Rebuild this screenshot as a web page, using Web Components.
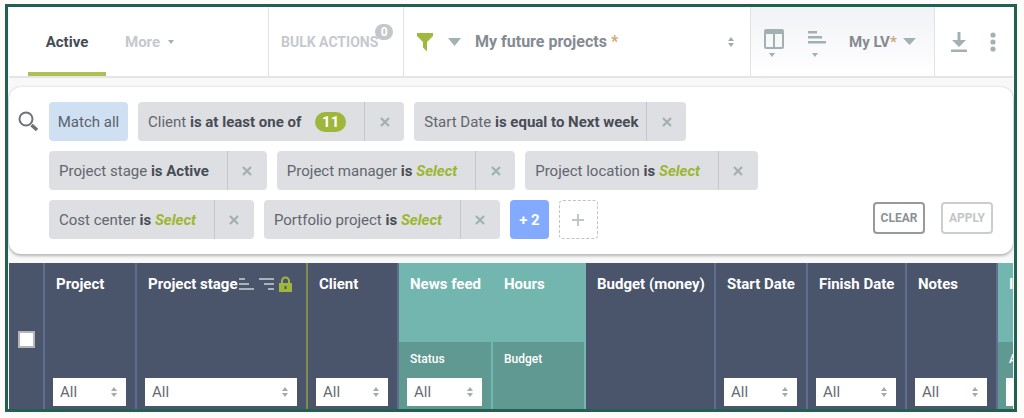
<!DOCTYPE html>
<html lang="en">
<head>
<meta charset="utf-8">
<title>Projects</title>
<style>
  body { margin: 0; background: #fdfcfb; font-family: Roboto, "Liberation Sans", sans-serif; font-size: 15px; line-height: 20px; color: #4a4d55; }
</style>
</head>
<body>
<project-list-page></project-list-page>

<template id="page-tpl">
  <style>
    :host { display: block; padding: 4px 7px 6px 5px; }
    main { border: 3px solid #22614f; padding: 0 1px; background: #f8f8f8; overflow: hidden; }
    filter-panel { margin: 9px 0; }
  </style>
  <main>
    <top-bar></top-bar>
    <filter-panel></filter-panel>
    <project-grid></project-grid>
  </main>
</template>

<template id="topbar-tpl">
  <style>
    :host { display: grid; grid-template-columns: 259px 135px minmax(0, 1fr) 184px 79px; height: 69px; background: #fff; border-bottom: 2px solid #e4e6e6; }
    * { box-sizing: border-box; }
    section, nav { display: flex; align-items: center; }
    section { border-left: 1px solid #e0e2e3; }
    button, select { font: inherit; color: inherit; background: none; border: 0; padding: 0; margin: 0; appearance: none; font-weight: 700; }
    nav { padding-left: 19px; }
    nav a { text-decoration: none; font-weight: 700; height: 69px; display: flex; align-items: center; color: #c5c9cd; gap: 8px; }
    nav a[aria-current] { color: #454a55; width: 78px; justify-content: center; border-bottom: 4px solid #aebf56; border-top: 4px solid transparent; }
    nav a + a { margin-left: 19px; }
    .bulk { padding-left: 12px; }
    .bulk button { color: #c5c9cd; font-size: 14px; display: flex; white-space: nowrap; }
    .badge { background: #c3c7cc; color: #fff; border-radius: 8px; width: 18px; height: 16px; line-height: 16px; font-size: 12px; text-align: center; margin: -8px 0 0 -3px; }
    .saved { padding: 0 16px 0 12px; color: #858b92; gap: 14px; font-size: 16px; }
    .saved .name { display: flex; gap: 4px; flex: 1; }
    .star { color: #cfa77c; font-weight: 700; }
    .view { background: linear-gradient(#f1f2f6, #fff); padding-left: 13px; color: #858b92; }
    .view .icon { margin-right: 24px; }
    .view .icon + .icon { margin-right: 23px; }
    .view .name { display: flex; align-items: center; }
    .view .caret { margin-left: 6px; }
    .end { padding-left: 15px; gap: 22px; }
    svg { display: block; fill: #a3b1b3; }
  </style>
  <nav>
    <a href="#active" aria-current="page">Active</a>
    <a href="#more">More <svg width="6" height="4"><path d="M0 0h6L3 4z"/></svg></a>
  </nav>
  <section class="bulk"><button>BULK ACTIONS<span class="badge">0</span></button></section>
  <section class="saved">
    <button aria-label="Filter"><svg width="18" height="20" style="fill:#9fb93f"><path d="M1 1h16v3l-6 6v9.500l-4-4V10L1 4z"/></svg></button>
    <button aria-label="Filter options"><svg width="13" height="8"><path d="M0 0h13L6.500 8z"/></svg></button>
    <span class="name"><select aria-label="Saved filter"><option>My future projects</option></select><span class="star">*</span></span>
    <sort-handle></sort-handle>
  </section>
  <section class="view">
    <button class="icon" aria-label="Columns"><svg width="20" height="30"><path fill-rule="evenodd" d="M2 2h16q2 0 2 2v16q0 2-2 2H2q-2 0-2-2V4q0-2 2-2zM2 7v13h7V7zM11 7v13h7V7zM5 26h6l-3 4z"/></svg></button>
    <button class="icon" aria-label="Grouping"><svg width="18" height="30"><path d="M0 4h9v2.400H0zM0 9h14v2.400H0zM0 14h18v2.400H0zM4 26h6l-3 4z"/></svg></button>
    <span class="name"><select aria-label="List view"><option>My LV</option></select><span class="star">*</span><svg class="caret" width="13" height="7"><path d="M0 0h13L6.500 7z"/></svg></span>
  </section>
  <section class="end">
    <button aria-label="Download"><svg width="18" height="20"><path d="M7.500 0h3v8H16l-7 7-7-7h5.500zM1 17.500h16V20H1z"/></svg></button>
    <button aria-label="More options"><svg width="6" height="20"><circle cx="3" cy="3" r="2.600"/><circle cx="3" cy="10" r="2.600"/><circle cx="3" cy="17" r="2.600"/></svg></button>
  </section>
</template>

<template id="handle-tpl">
  <style>:host { display: block; pointer-events: none; } svg { display: block; fill: #a3abad; }</style>
  <svg width="6" height="10"><path d="M0 4L3 0l3 4zM0 6h6L3 10z"/></svg>
</template>

<template id="panel-tpl">
  <style>
    :host { display: flex; gap: 11px; background: #fff; border-radius: 12px; padding: 15px 20px 15px 9px; box-shadow: 0 0 2px #c5c8c8, 0 2px 3px #b4b6b6; }
    .search { margin-top: 8px; flex: none; }
    .chips { flex: 1; display: flex; flex-wrap: wrap; gap: 10px; }
    button { font: inherit; margin: 0; padding: 0; box-sizing: border-box; cursor: pointer; }
    .chips > button { height: 39px; border: 0; border-radius: 4px; font-weight: 700; width: 39px; }
    .chips > .match { width: 79px; background: #cfe0f3; color: #5c626b; font-weight: 400; }
    .chips > .more { background: #82aaff; color: #fff; }
    .chips > .add { background: #fff; border: 1px dashed #bfc2c6; display: grid; place-items: center; }
    .actions { display: flex; gap: 16px; align-self: flex-end; padding-bottom: 5px; }
    .actions button { width: 52px; height: 32px; border: 2px solid #969a9e; border-radius: 4px; background: #fff; color: #8b9196; font-size: 12px; line-height: 28px; font-weight: 700; }
    .actions button + button { border-color: #cbced0; color: #c3c6c8; }
    .badge { background: #9eb63c; color: #fff; border-radius: 10px; padding: 0 7px; margin-left: 10px; font-weight: 700; display: inline-block; }
  </style>
  <svg class="search" width="20" height="22" fill="none" stroke="#6f7377"><circle cx="8" cy="9" r="6.500" stroke-width="2"/><path d="M13.500 15l5.500 5" stroke-width="3.500"/></svg>
  <div class="chips">
    <button class="match">Match all</button>
    <filter-chip>Client <b slot="rule">is at least one of</b><span slot="value" class="badge">11</span></filter-chip>
    <filter-chip tight>Start Date <b slot="rule">is equal to Next week</b></filter-chip>
    <filter-chip>Project stage <b slot="rule">is Active</b></filter-chip>
    <filter-chip select>Project manager <b slot="rule">is</b></filter-chip>
    <filter-chip select>Project location <b slot="rule">is</b></filter-chip>
    <filter-chip select>Cost center <b slot="rule">is</b></filter-chip>
    <filter-chip select>Portfolio project <b slot="rule">is</b></filter-chip>
    <button class="more">+ 2</button>
    <button class="add" aria-label="Add filter"><svg width="12" height="12" stroke="#c2c5c9" stroke-width="2"><path d="M6 0v12M0 6h12"/></svg></button>
  </div>
  <div class="actions"><button>CLEAR</button><button>APPLY</button></div>
</template>

<template id="chip-tpl">
  <style>
    :host { display: flex; height: 39px; background: #dddfe3; border-radius: 4px; color: #62666e; white-space: nowrap; }
    .text { padding: 10px 18px 9px 10px; }
    :host([tight]) .text { padding-right: 8px; }
    ::slotted(b) { color: #484c55; }
    .pick { display: none; color: #9cb62f; font-weight: 700; font-style: italic; text-decoration: none; }
    :host([select]) .pick { display: inline; }
    button { width: 40px; padding: 0; border: 0; border-left: 1px solid #c3c8cc; background: none; display: grid; place-items: center; cursor: pointer; }
  </style>
  <div class="text"><slot></slot> <slot name="rule"></slot> <slot name="value"></slot><a class="pick" href="#select">Select</a></div>
  <button aria-label="Remove filter"><svg width="10" height="10" stroke="#a4afb1" stroke-width="2.200"><path d="M1 1l8 8M9 1l-8 8"/></svg></button>
</template>

<template id="filter-tpl">
  <style>
    :host { display: grid; align-items: center; }
    select, sort-handle { grid-area: 1 / 1; }
    select { appearance: none; width: 100%; height: 28px; border: 0; border-radius: 0; margin: 0; padding: 0 7px; background: #fff; font: inherit; font-weight: 400; color: #666b72; }
    sort-handle { justify-self: end; margin-right: 9px; }
  </style>
  <select aria-label="Column filter"><option>All</option></select><sort-handle></sort-handle>
</template>

<template id="grid-tpl">
  <style>
    :host { display: block; overflow: hidden; }
    table { width: 1080px; min-width: 100%; table-layout: fixed; border-collapse: separate; border-spacing: 0; color: #fff; background: #4a546b; }
    th, td { padding: 0; box-sizing: border-box; text-align: left; border-right: 2px solid #5f6d8e; white-space: nowrap; overflow: hidden; }
    th { vertical-align: top; padding: 11px 0 0 11px; font-weight: 700; font-size: 15px; }
    td { height: 34px; padding: 0 9px 0 8px; }
    .top { height: 79px; }
    .sub { height: 33px; }
    .check { vertical-align: middle; padding: 6px 0 0 9px; }
    input { display: block; appearance: none; width: 17px; height: 17px; margin: 0; background: #fff; border: 2px solid #b3b5b8; }
    .group { background: #72b6af; border-color: #72b6af; }
    .leaf { background: #5f9992; border-color: #72b6af; }
    .sub .leaf { font-size: 12px; font-weight: 500; line-height: 16px; padding-top: 9px; }
    .locked { border-color: #7f8c4a; }
    .head { display: flex; align-items: center; gap: 1px; }
    svg { flex: none; fill: #a9b3bd; }
    .head svg + svg { margin-left: 4px; }
  </style>
  <table>
    <colgroup><col style="width:36px"><col style="width:92px"><col style="width:171px"><col style="width:91px"><col style="width:94px"><col style="width:93px"><col style="width:130px"><col style="width:92px"><col style="width:99px"><col style="width:91px"><col></colgroup>
    <tr class="top">
      <th class="check" rowspan="3"><input type="checkbox" aria-label="Select all projects"></th>
      <th rowspan="2">Project</th>
      <th rowspan="2" class="locked"><div class="head">Project stage
        <svg width="15" height="13"><path d="M0 0h6v2H0zM0 5h10v2H0zM0 10h15v2H0z"/></svg>
        <svg width="15" height="13"><path d="M0 0h15v2H0zM5 5h10v2H5zM9 10h6v2H9z"/></svg>
        <svg width="13" height="16" style="fill:#9eb63c"><path fill-rule="evenodd" d="M0 7h2V5a4.500 4.500 0 0 1 9 0v2h2v9H0zM4 7h5V5a2.500 2.500 0 0 0-5 0zM5.500 10v3h2v-3z"/></svg>
      </div></th>
      <th rowspan="2">Client</th>
      <th class="group">News feed</th>
      <th class="group">Hours</th>
      <th rowspan="2">Budget (money)</th>
      <th rowspan="2">Start Date</th>
      <th rowspan="2">Finish Date</th>
      <th rowspan="2">Notes</th>
      <th class="group">I</th>
    </tr>
    <tr class="sub"><th class="leaf">Status</th><th class="leaf">Budget</th><th class="leaf">A</th></tr>
    <tr>
      <td><column-filter></column-filter></td>
      <td class="locked"><column-filter></column-filter></td>
      <td><column-filter></column-filter></td>
      <td class="leaf"><column-filter></column-filter></td>
      <td class="leaf"></td>
      <td></td>
      <td><column-filter></column-filter></td>
      <td><column-filter></column-filter></td>
      <td><column-filter></column-filter></td>
      <td class="leaf"><column-filter></column-filter></td>
    </tr>
  </table>
</template>

<script>
  const parts = {
    'sort-handle': 'handle-tpl',
    'column-filter': 'filter-tpl',
    'filter-chip': 'chip-tpl',
    'top-bar': 'topbar-tpl',
    'filter-panel': 'panel-tpl',
    'project-grid': 'grid-tpl',
    'project-list-page': 'page-tpl'
  };
  for (const [tag, id] of Object.entries(parts)) {
    customElements.define(tag, class extends HTMLElement {
      constructor() {
        super();
        this.attachShadow({ mode: 'open' }).append(document.getElementById(id).content.cloneNode(true));
      }
    });
  }
</script>
</body>
</html>
